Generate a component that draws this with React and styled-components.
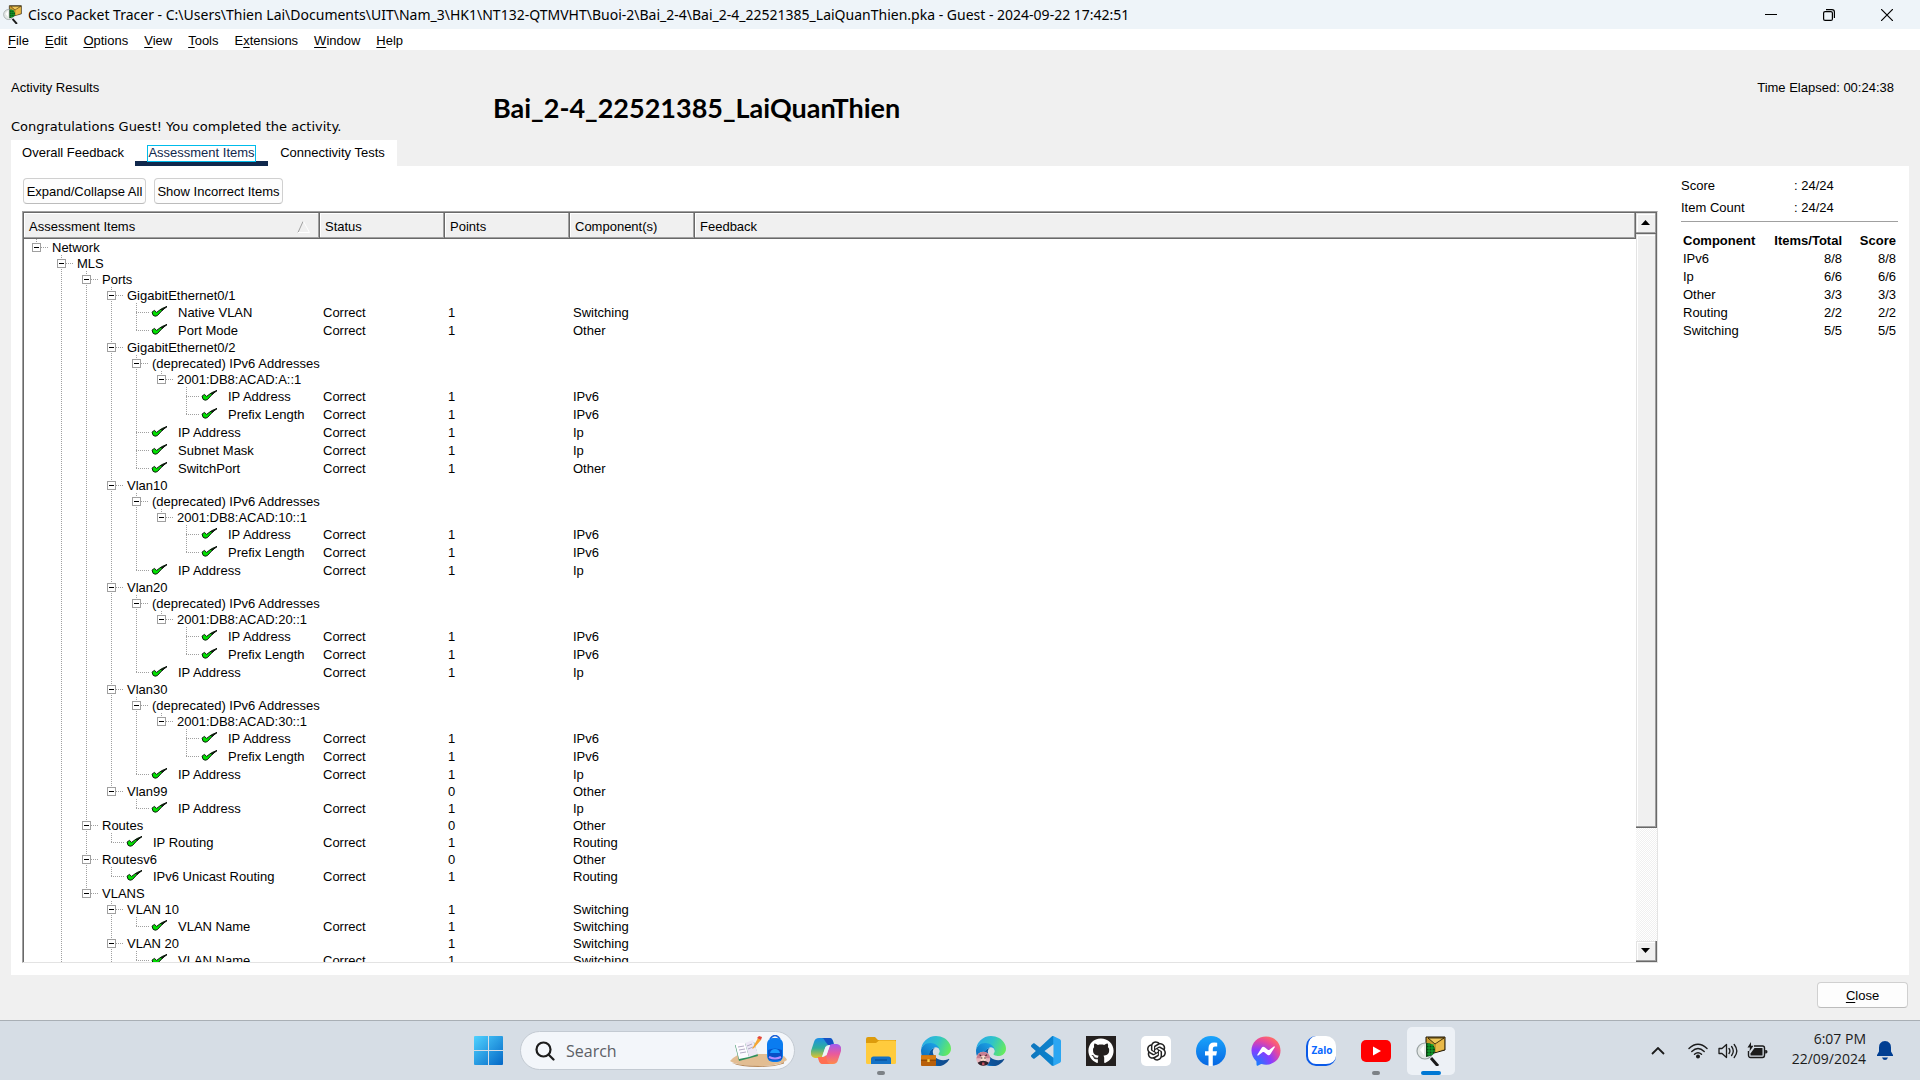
import React, { useState } from "react";
import styled, { createGlobalStyle } from "styled-components";
import { FaGithub, FaFacebookMessenger } from "react-icons/fa";
import { AiOutlineOpenAI } from "react-icons/ai";

const UI = `"Liberation Sans", Arial, sans-serif`;
const SYSTEM = `"Open Sans", "Noto Sans", sans-serif`;

const GlobalStyle = createGlobalStyle`
  * { box-sizing: border-box; }
  body { margin: 0; background: #f0f0f0; color: #000; font: 13px/16px ${UI}; }
  button, input { font: inherit; color: inherit; padding: 0; margin: 0; border: 0; background: none; }
  h1, p, dl, dd, dt { margin: 0; }
  svg { display: block; flex: none; }
`;

const Screen = styled.div`
  display: flex;
  flex-direction: column;
  height: 100vh;
  overflow: hidden;
`;

/* ---------- title bar and menu ---------- */

const TitleBar = styled.header`
  display: flex;
  align-items: center;
  flex: none;
  height: 29px;
  padding: 0 7px 0 3px;
  gap: 6px;
  background: #eef4f9;
`;

const WindowTitle = styled.div`
  flex: 1;
  font: 14px/20px "Noto Sans", "Open Sans", sans-serif;
  white-space: nowrap;
`;

const WindowButton = styled.button`
  display: grid;
  place-items: center;
  width: 52px;
  height: 29px;
`;

const MenuBar = styled.nav`
  display: flex;
  flex: none;
  height: 21px;
  background: #fff;
`;

const MenuItem = styled.button`
  padding: 2px 8px 0;
  line-height: 19px;
`;

const Mnemonic = styled.span`
  text-decoration: underline;
  text-underline-offset: 2px;
`;

/* ---------- results area ---------- */

const Results = styled.main`
  display: flex;
  flex-direction: column;
  flex: 1;
  min-height: 0;
  background: #f0f0f0;
`;

const Summary = styled.section`
  display: grid;
  grid-template-columns: 482px auto 1fr;
  flex: none;
  padding: 30px 26px 5px 11px;
`;

const Messages = styled.div`
  display: flex;
  flex-direction: column;
  gap: 23px;
`;

const Congratulations = styled.p`
  font-family: "DejaVu Sans", Verdana, sans-serif;
  white-space: nowrap;
`;

const StudentName = styled.h1`
  align-self: center;
  font: bold 27px/32px Lato, Carlito, sans-serif;
`;

const Elapsed = styled.p`
  text-align: right;
`;

const TabList = styled.div`
  display: flex;
  flex: none;
  align-self: flex-start;
  height: 26px;
  margin-left: 11px;
  background: #fff;
`;

const Tab = styled.button`
  display: flex;
  justify-content: center;
  min-width: ${(p) => p.$width};
  height: 26px;
  padding-top: 6px;
  border-bottom: 5px solid ${(p) => (p.$active ? "#10284c" : "transparent")};
  color: ${(p) => (p.$active ? "#10284c" : "#000")};
  line-height: 14px;
`;

const TabLabel = styled.span`
  outline: ${(p) => (p.$active ? "1px solid #00bceb" : "none")};
`;

const Panel = styled.section`
  display: flex;
  flex: 1;
  gap: 23px;
  min-height: 0;
  margin: 0 11px;
  padding: 12px 11px 12px;
  background: #fff;
`;

const ItemsColumn = styled.div`
  display: flex;
  flex-direction: column;
  gap: 7px;
  flex: 1;
  min-width: 0;
`;

const Toolbar = styled.div`
  display: flex;
  gap: 8px;
  padding-left: 1px;
`;

const PushButton = styled.button`
  height: 26px;
  min-width: ${(p) => p.$minWidth || "0"};
  padding: 2px 2px 0;
  border: 1px solid #d0d0d0;
  border-bottom-color: #bcbcbc;
  border-radius: 4px;
  background: #fdfdfd;
`;

/* ---------- tree table ---------- */

const Frame = styled.div`
  flex: 1;
  min-height: 0;
  border: 1px solid #a0a0a0;
  border-right-color: #e3e3e3;
  border-bottom-color: #e3e3e3;
`;

const FrameInner = styled.div`
  display: flex;
  height: 100%;
  border-top: 1px solid #696969;
  border-left: 1px solid #696969;
`;

const Viewport = styled.div`
  flex: 1;
  min-width: 0;
  overflow: hidden;
`;

const TreeTable = styled.table`
  width: 100%;
  table-layout: fixed;
  border-collapse: collapse;
`;

const Column = styled.col`
  width: ${(p) => p.$width || "auto"};
`;

const HeadCell = styled.th`
  height: 26px;
  padding: 2px 9px 0 5px;
  background: #f0f0f0;
  box-shadow: inset -1px -1px #696969, inset -2px -2px #a0a0a0, inset 1px 1px #fff;
  font-weight: normal;
  text-align: left;
`;

const HeadContent = styled.div`
  display: flex;
  align-items: center;
  justify-content: space-between;
`;

const Row = styled.tr`
  height: ${(p) => (p.$leaf ? 18 : 16)}px;
`;

const Cell = styled.td`
  padding: 2px 0 0 3px;
  line-height: 14px;
  white-space: nowrap;
`;

const NameCell = styled.td`
  padding: 0;
`;

const NameLine = styled.div`
  display: flex;
  align-items: center;
  height: ${(p) => (p.$leaf ? 18 : 16)}px;
  line-height: 14px;
  white-space: nowrap;
`;

const DOTS_DOWN = "repeating-linear-gradient(#a0a0a0 0 1px, transparent 1px 2px)";
const DOTS_RIGHT = "repeating-linear-gradient(90deg, #a0a0a0 0 1px, transparent 1px 2px)";

const Guide = styled.span`
  display: flex;
  align-items: center;
  align-self: stretch;
  flex: none;
  width: 25px;
  background: ${(p) => (p.$line === "none" ? "none" : DOTS_DOWN)} 12px 0 / 1px
    ${(p) => (p.$line === "half" ? "50%" : "100%")} no-repeat;
`;

const Branch = styled.span`
  flex: 1;
  height: 1px;
  margin-left: ${(p) => (p.$leaf ? "12px" : "0")};
  background: ${DOTS_RIGHT};
`;

const Toggle = styled.button`
  display: grid;
  place-items: center;
  flex: none;
  width: 9px;
  height: 9px;
  margin-left: 8px;
  border: 1px solid #a0a0a0;
  background: #fff;
`;

const Label = styled.span`
  padding-top: 2px;
  padding-left: ${(p) => (p.$leaf ? "10px" : "3px")};
`;

const CheckMark = styled.svg`
  margin-left: 2px;
  width: 17px;
  height: 14px;
`;

/* ---------- scroll bar ---------- */

const ScrollBar = styled.div`
  display: flex;
  flex-direction: column;
  flex: none;
  width: 21px;
`;

const ScrollButton = styled.button`
  display: grid;
  place-items: center;
  flex: none;
  height: 21px;
  padding: 0 2px 2px 0;
  background: #f0f0f0;
  box-shadow: inset -1px -1px #696969, inset -2px -2px #a0a0a0, inset 1px 1px #e3e3e3, inset 2px 2px #fff;
`;

const ScrollTrack = styled.div`
  flex: 1;
  background: repeating-conic-gradient(#f0f0f0 0 25%, #fff 0 50%) 0 0 / 2px 2px;
`;

const ScrollThumb = styled.div`
  height: 84%;
  background: #f0f0f0;
  box-shadow: inset -1px -1px #696969, inset -2px -2px #a0a0a0, inset 1px 1px #e3e3e3, inset 2px 2px #fff;
`;

/* ---------- score side bar ---------- */

const SideBar = styled.aside`
  flex: none;
  width: 217px;
  padding-top: 1px;
`;

const Totals = styled.dl`
  display: grid;
  grid-template-columns: 113px 1fr;
  row-gap: 8px;
  padding-bottom: 6px;
  border-bottom: 1px solid #a0a0a0;
  line-height: 14px;
`;

const ScoreTable = styled.table`
  width: 100%;
  margin-top: 9px;
  border-collapse: collapse;
  th, td { height: 18px; padding: 2px 2px 0; line-height: 14px; text-align: right; }
  th:first-child, td:first-child { text-align: left; }
  th:last-child { width: 54px; }
`;

const Footer = styled.footer`
  display: flex;
  justify-content: flex-end;
  flex: none;
  padding: 7px 12px 12px;
`;

/* ---------- task bar ---------- */

const TaskBar = styled.footer`
  display: grid;
  grid-template-columns: 1fr auto 1fr;
  align-items: center;
  flex: none;
  height: 60px;
  border-top: 1px solid #a9afb5;
  background: #d6dde5;
  font: 14px/20px ${SYSTEM};
`;

const Apps = styled.div`
  display: flex;
  grid-column: 2;
  align-items: center;
  gap: 7px;
`;

const AppButton = styled.button`
  position: relative;
  display: grid;
  place-items: center;
  width: 48px;
  height: 48px;
  border-radius: 5px;
  background: ${(p) => (p.$active ? "#edf1f6" : "transparent")};
`;

const Indicator = styled.span`
  position: absolute;
  bottom: 0;
  left: 50%;
  width: ${(p) => (p.$active ? "20px" : "8px")};
  height: 4px;
  border-radius: 2px;
  background: ${(p) => (p.$active ? "#0078d4" : "#7c8186")};
  transform: translateX(-50%);
`;

const SearchBox = styled.label`
  display: flex;
  align-items: center;
  width: 275px;
  height: 39px;
  padding: 0 6px 0 14px;
  gap: 11px;
  border: 1px solid #c3cad2;
  border-radius: 20px;
  background: #f3f6fa;
`;

const SearchInput = styled.input`
  flex: 1;
  min-width: 0;
  font: 16px/22px ${SYSTEM};
  outline: none;
  &::placeholder { color: #5c6066; opacity: 1; }
`;

const Tile = styled.span`
  display: grid;
  place-items: center;
  width: 30px;
  height: 30px;
  border-radius: ${(p) => p.$radius};
  background: ${(p) => p.$bg};
  color: ${(p) => p.$color};
`;

const ZaloTile = styled(Tile)`
  border-left: 2px solid #0a5ae8;
  border-bottom: 2px solid #0a5ae8;
  font: bold 10px/14px "Open Sans", sans-serif;
`;

const Tray = styled.div`
  display: flex;
  align-items: center;
  justify-content: flex-end;
  grid-column: 3;
  padding-right: 24px;
`;

const TrayButton = styled.button`
  display: grid;
  place-items: center;
  width: ${(p) => p.$width || "30px"};
  height: 40px;
`;

const Clock = styled.button`
  padding: 0 8px 3px 19px;
  color: #1b1b1b;
  text-align: right;
`;

/* ---------- data ---------- */

const leaf = (name, component) => ({ name, status: "Correct", points: 1, component });
const ipv6Group = (address) => ({
  name: "(deprecated) IPv6 Addresses",
  children: [{ name: address, children: [leaf("IP Address", "IPv6"), leaf("Prefix Length", "IPv6")] }],
});
const vlanPort = (name, address) => ({ name, children: [ipv6Group(address), leaf("IP Address", "Ip")] });

const tree = [
  {
    name: "Network",
    children: [
      {
        name: "MLS",
        more: true,
        children: [
          {
            name: "Ports",
            children: [
              { name: "GigabitEthernet0/1", children: [leaf("Native VLAN", "Switching"), leaf("Port Mode", "Other")] },
              {
                name: "GigabitEthernet0/2",
                children: [
                  ipv6Group("2001:DB8:ACAD:A::1"),
                  leaf("IP Address", "Ip"),
                  leaf("Subnet Mask", "Ip"),
                  leaf("SwitchPort", "Other"),
                ],
              },
              vlanPort("Vlan10", "2001:DB8:ACAD:10::1"),
              vlanPort("Vlan20", "2001:DB8:ACAD:20::1"),
              vlanPort("Vlan30", "2001:DB8:ACAD:30::1"),
              { name: "Vlan99", points: 0, component: "Other", children: [leaf("IP Address", "Ip")] },
            ],
          },
          { name: "Routes", points: 0, component: "Other", children: [leaf("IP Routing", "Routing")] },
          { name: "Routesv6", points: 0, component: "Other", children: [leaf("IPv6 Unicast Routing", "Routing")] },
          {
            name: "VLANS",
            children: [
              { name: "VLAN 10", points: 1, component: "Switching", children: [leaf("VLAN Name", "Switching")] },
              { name: "VLAN 20", points: 1, component: "Switching", more: true, children: [leaf("VLAN Name", "Switching")] },
            ],
          },
        ],
      },
    ],
  },
];

function flatten(nodes, closed, lines = [], prefix = "") {
  return nodes.flatMap((node, i) => {
    const id = `${prefix}/${i}`;
    const continues = Boolean(node.more) || i < nodes.length - 1;
    const row = { ...node, id, lines, continues };
    const below = node.children && !closed.has(id) ? flatten(node.children, closed, [...lines, continues], id) : [];
    return [row, ...below];
  });
}

const scores = [
  ["IPv6", "8/8", "8/8"],
  ["Ip", "6/6", "6/6"],
  ["Other", "3/3", "3/3"],
  ["Routing", "2/2", "2/2"],
  ["Switching", "5/5", "5/5"],
];

const menus = [
  ["", "F", "ile"],
  ["", "E", "dit"],
  ["", "O", "ptions"],
  ["", "V", "iew"],
  ["", "T", "ools"],
  ["E", "x", "tensions"],
  ["", "W", "indow"],
  ["", "H", "elp"],
];

const tabs = [
  { name: "Overall Feedback", width: "124px" },
  { name: "Assessment Items", width: "133px", active: true },
  { name: "Connectivity Tests", width: "129px" },
];

/* ---------- icons ---------- */

const PacketTracerIcon = ({ size }) => (
  <svg width={size} height={size} viewBox="0 0 30 30">
    <path d="M10 1h19v13l-11 3-8-6z" fill="#c99a2e" stroke="#1c1404" />
    <path d="M12 2l16 0-9 6z" fill="#f0c75a" stroke="#1c1404" strokeWidth=".8" />
    <path d="M28 3v10l-8 3v-8z" fill="#e9b949" />
    <circle cx="9" cy="15" r="8" fill="#e4e8e6" stroke="#9aa3a3" strokeWidth="1.2" />
    <path d="M10 7c6 0 9 3 9 7s-3 6-9 7z" fill="#0c4413" />
    <path d="M11 9h7M11 12h8M11 15h8M11 18h6M13 7v13M16 8v11" stroke="#12b52f" strokeWidth=".9" />
    <path d="M4 14l4-5v10z" fill="#fff" />
    <path d="M15 22l7 8" stroke="#1a1a1a" strokeWidth="3" />
  </svg>
);

const Check = () => (
  <CheckMark viewBox="0 0 17 14" aria-hidden="true">
    <path d="M1 7.2L3.4 5.4L5.6 7.4Q10 3.2 16 1.4Q10.6 5.4 6.4 10.6L4.2 11.2L2.2 10.4Z" fill="#00e000" stroke="#0a1a0a" strokeWidth="1" strokeLinejoin="round" />
    <path d="M10 4.800L16 1.6L11 5.500Z" fill="#111" stroke="#111" strokeWidth=".6" />
  </CheckMark>
);

const SortArrow = () => (
  <svg width="14" height="14" viewBox="0 0 14 14">
    <path d="M1 12.5L6 1.5" stroke="#a0a0a0" fill="none" />
    <path d="M6.5 1.5L12.5 12.5H1" stroke="#fff" fill="none" />
  </svg>
);

const WindowsIcon = () => (
  <svg width="30" height="30" viewBox="0 0 30 30">
    <defs>
      <linearGradient id="win" x1="0" y1="0" x2="1" y2="1">
        <stop offset="0" stopColor="#4fd2ff" />
        <stop offset="1" stopColor="#0467c6" />
      </linearGradient>
    </defs>
    <path d="M1 0h13v14H0V1q0-1 1-1zM15 0h13q1 0 1 1v13H15zM0 15h14v14H1q-1 0-1-1zM15 15h14v13q0 1-1 1H15z" fill="url(#win)" />
  </svg>
);

const SearchIcon = () => (
  <svg width="20" height="20" viewBox="0 0 20 20" fill="none" stroke="#1c1c1c" strokeWidth="2.2">
    <circle cx="8.5" cy="8.5" r="7" />
    <path d="M13.5 13.5L18.5 18.5" strokeLinecap="round" />
  </svg>
);

const SchoolArt = () => (
  <svg width="58" height="32" viewBox="0 0 58 32">
    <path d="M0 26Q6 19 14 19H48Q56 21 57 25Q50 31 30 31Q8 31 0 26Z" fill="#e2bd92" />
    <path d="M2 28Q14 31 30 31Q48 31 54 27V28.500Q44 32 28 32Q10 32 2 28Z" fill="#b98b5c" />
    <path d="M5 10L9 26L28 21L24 7Z" fill="#2f8f5b" />
    <path d="M5 8L15 8L19 22L9 24Z" fill="#fdfbff" />
    <path d="M15 8L23 5L28 19L19 22Z" fill="#ece7f5" />
    <path d="M8 12l6-1M9 15l6-1M10 18l6-1M17 11l5-2M18 14l5-2" stroke="#a9a3bd" strokeWidth=".9" />
    <path d="M22 14L28 3L31 5L24 13Z" fill="#f6a531" />
    <path d="M27 3L29 1L32 2L31 5Z" fill="#e4483a" />
    <path d="M40 4Q45-3 50 4" fill="none" stroke="#1e63d8" strokeWidth="1.600" />
    <rect x="37" y="3" width="16" height="24" rx="6" fill="#0a7cf0" />
    <path d="M38 15Q45 12 52 15V24Q45 27 38 24Z" fill="#0550c8" />
    <path d="M40 18Q41 14 45 14T50 18Z" fill="#1a9cff" />
    <path d="M39 22q6 3 12 0" stroke="#b48cff" strokeWidth="2" fill="none" />
  </svg>
);

const CopilotIcon = () => (
  <svg width="30" height="28" viewBox="0 0 30 28">
    <defs>
      <linearGradient id="cpA" x1="0" y1="0" x2="0" y2="1">
        <stop offset="0" stopColor="#1c8ee8" />
        <stop offset=".5" stopColor="#2fae9a" />
        <stop offset="1" stopColor="#e6c32a" />
      </linearGradient>
      <linearGradient id="cpB" x1="0" y1="0" x2="0" y2="1">
        <stop offset="0" stopColor="#a25cf0" />
        <stop offset=".5" stopColor="#ea5a9c" />
        <stop offset="1" stopColor="#ff8a4a" />
      </linearGradient>
    </defs>
    <path d="M8 1H19Q21 1 22 4L23 8H18Q15 8 14 11L11 20Q10 21 8 21H4Q-1 20 0 14L3 5Q4 1 8 1Z" fill="url(#cpA)" />
    <path d="M11 1H19Q21 1 22 4L23 8H17L14 4Q13 1 11 1Z" fill="#1552c4" />
    <path d="M22 27H11Q9 27 8 24L7 20H12Q15 20 16 17L19 8Q20 7 22 7H26Q31 8 30 14L27 23Q26 27 22 27Z" fill="url(#cpB)" />
    <path d="M7 20H12Q14 20 15 18L16 24Q17 27 19 27H11Q9 27 8 24Z" fill="#ff6f52" />
    <path d="M14.500 10L19 8L15.500 18L11 20Z" fill="#eef3f8" />
  </svg>
);

const FolderIcon = () => (
  <svg width="30" height="28" viewBox="0 0 30 28">
    <path d="M0 2Q0 0 2 0H9L12 3H30V12H0Z" fill="#dd9b0c" />
    <path d="M0 6H10L13 3.500H29Q30 3.500 30 5V25.500Q30 27 28.500 27H1.500Q0 27 0 25.500Z" fill="#ffcb3d" />
    <path d="M5 27V22Q5 19.500 7.500 19.500H22.500Q25 19.500 25 22V27Z" fill="#1371c6" />
    <path d="M9 23H21" stroke="#0a4d94" strokeWidth="1.200" />
  </svg>
);

const EdgeIcon = ({ id, children }) => (
  <svg width="30" height="30" viewBox="0 0 256 256">
    <defs>
      <linearGradient id={`${id}a`} x1="0" y1="0" x2="1" y2="0">
        <stop offset="0" stopColor="#0c59a4" />
        <stop offset="1" stopColor="#114a8b" />
      </linearGradient>
      <linearGradient id={`${id}b`} x1=".8" y1=".2" x2=".3" y2="1">
        <stop offset="0" stopColor="#1b9de2" />
        <stop offset="1" stopColor="#0a62b5" />
      </linearGradient>
      <linearGradient id={`${id}c`} x1="0" y1=".3" x2="1" y2=".6">
        <stop offset="0" stopColor="#2aa9ea" />
        <stop offset=".5" stopColor="#2fc3c9" />
        <stop offset="1" stopColor="#66eb5c" />
      </linearGradient>
    </defs>
    <path fill={`url(#${id}a)`} d="M235.7 195.500a93.700 93.700 0 01-10.600 4.700 101.900 101.900 0 01-35.900 6.400c-47.300 0-88.500-32.500-88.500-74.300a31.500 31.500 0 0116.400-27.300c-42.800 1.800-53.800 46.400-53.800 72.500 0 74 68.100 81.400 82.800 81.400 7.900 0 19.800-2.300 27-4.600l1.300-.4a128.300 128.300 0 0066.600-52.800 4 4 0 00-5.300-5.600z" />
    <path fill={`url(#${id}b)`} d="M105.700 241.400a79.200 79.200 0 01-22.700-21.300 80.700 80.700 0 0129.500-120c3.200-1.500 8.500-4.100 15.600-4a32.400 32.400 0 0125.700 13 31.900 31.900 0 016.300 18.700c0-.2 24.500-79.600-80-79.600-43.900 0-80 41.600-80 78.200a130.200 130.200 0 0012.100 56 128 128 0 00156.400 67 75.500 75.500 0 01-62.800-8z" />
    <path fill={`url(#${id}c)`} d="M152.300 148.900c-.9 1-3.400 2.500-3.400 5.600 0 2.600 1.700 5.200 4.800 7.300 14.300 10 41.400 8.600 41.500 8.600a59.600 59.600 0 0030.300-8.300 61.400 61.400 0 0030.400-52.900c.3-22.400-8-37.300-11.300-43.900C223.500 23.900 177.700 0 128 0A128 128 0 000 126.200c.5-36.500 36.800-66 80-66 3.500 0 23.500.3 42 10a72.600 72.600 0 0130.900 29.300c6.100 10.600 7.200 24.100 7.200 29.500s-2.700 13.300-7.800 19.900z" />
    {children}
  </svg>
);

const Briefcase = () => (
  <g>
    <rect x="0" y="164" width="128" height="92" rx="8" fill="#b85f0a" />
    <rect x="0" y="164" width="128" height="42" rx="8" fill="#d97c10" />
    <path d="M0 206H128" stroke="#7c3c04" strokeWidth="8" />
    <rect x="54" y="198" width="20" height="24" fill="#ffd24a" />
  </g>
);

const Avatar = () => (
  <g>
    <circle cx="62" cy="194" r="60" fill="#e8b6bd" />
    <path d="M4 190Q12 134 62 134Q112 136 120 190L88 190L62 164L38 190Z" fill="#c97f92" />
    <circle cx="62" cy="192" r="24" fill="#f7dccb" />
    <path d="M14 228Q60 196 110 228Q96 254 62 254Q28 254 14 228Z" fill="#2e2029" />
    <path d="M40 188h14M70 188h14M30 160l14 8M94 160l-14 8" stroke="#40262c" strokeWidth="9" />
    <path d="M52 226h20v22H52z" fill="#c9515f" />
  </g>
);

const CodeIcon = () => (
  <svg width="30" height="30" viewBox="0 0 100 100">
    <defs>
      <linearGradient id="vs" x1="0" y1="0" x2="1" y2="0">
        <stop offset="0" stopColor="#0f76bd" />
        <stop offset=".72" stopColor="#0b83cf" />
        <stop offset=".76" stopColor="#2ba6f2" />
        <stop offset="1" stopColor="#2ba6f2" />
      </linearGradient>
    </defs>
    <path fill="url(#vs)" fillRule="evenodd" d="M70.912 99.317C72.487 99.931 74.283 99.891 75.872 99.126L96.461 89.220C98.624 88.179 100 85.989 100 83.587V16.413C100 14.011 98.624 11.822 96.461 10.781L75.872 .874C73.786 -.130 71.345 .116 69.513 1.447C69.252 1.637 69.003 1.849 68.769 2.083L29.355 38.041L12.187 25.010C10.589 23.796 8.354 23.896 6.869 25.246L1.363 30.255C-.453 31.906 -.455 34.763 1.358 36.417L16.247 50L1.358 63.583C-.455 65.237 -.453 68.094 1.363 69.745L6.869 74.754C8.354 76.104 10.589 76.204 12.187 74.990L29.355 61.959L68.769 97.917C69.392 98.541 70.125 99.010 70.912 99.317ZM75.015 27.299L45.109 50L75.015 72.701V27.299Z" />
  </svg>
);

const FacebookIcon = () => (
  <svg width="30" height="30" viewBox="0 0 30 30">
    <defs>
      <linearGradient id="fb" x1="0" y1="0" x2="0" y2="1">
        <stop offset="0" stopColor="#1aa4fb" />
        <stop offset="1" stopColor="#0667e3" />
      </linearGradient>
    </defs>
    <circle cx="15" cy="15" r="15" fill="url(#fb)" />
    <path d="M12.500 30V19.500H9V15.300H12.500V12.200Q12.500 6.500 18.200 6.500Q20 6.500 21.200 6.800V10.500H19Q16.800 10.500 16.800 12.700V15.300H21L20.200 19.500H16.800V30Q14.500 30.200 12.500 30Z" fill="#fff" />
  </svg>
);

const MessengerIcon = () => (
  <svg width="30" height="30" viewBox="0 0 30 30">
    <defs>
      <radialGradient id="ms" cx=".15" cy="1" r="1.100">
        <stop offset="0" stopColor="#0a86ff" />
        <stop offset=".5" stopColor="#8a3cff" />
        <stop offset=".8" stopColor="#e8489c" />
        <stop offset="1" stopColor="#ff6a68" />
      </radialGradient>
    </defs>
    <circle cx="15" cy="14" r="10" fill="#fff" />
    <FaFacebookMessenger size={30} fill="url(#ms)" />
  </svg>
);

const YoutubeIcon = () => (
  <svg width="30" height="22" viewBox="0 0 30 22">
    <rect width="30" height="22" rx="5" fill="#f00" />
    <path d="M12 6.500L20 11L12 15.500Z" fill="#fff" />
  </svg>
);

const WifiIcon = () => (
  <svg width="20" height="16" viewBox="0 0 20 16" fill="none" stroke="#1b1b1b" strokeWidth="1.400" strokeLinecap="round">
    <path d="M1 5.500Q10-3 19 5.500M3.800 8.500Q10 2.500 16.200 8.500M6.500 11.300Q10 8 13.500 11.300" />
    <circle cx="10" cy="13.600" r="1.300" fill="#1b1b1b" />
  </svg>
);

const VolumeIcon = () => (
  <svg width="20" height="16" viewBox="0 0 20 16" fill="none" stroke="#1b1b1b" strokeWidth="1.300" strokeLinejoin="round" strokeLinecap="round">
    <path d="M1 5.500H4L8.500 1.500V14.500L4 10.500H1ZM11 5.500Q12.800 8 11 10.500M13.600 3.500Q17 8 13.600 12.500M16.200 1.500Q21.500 8 16.200 14.500" />
  </svg>
);

const BatteryIcon = () => (
  <svg width="21" height="17" viewBox="0 0 21 17">
    <path d="M7 4H15.500Q17.500 4 17.500 6V13Q17.500 15.500 15.500 15.500H3.500Q1.500 15.500 1.500 13V9" fill="none" stroke="#1b1b1b" strokeWidth="1.400" />
    <path d="M7.500 6H15.500V13.500H3.500V11.500Z" fill="#1b1b1b" />
    <path d="M18.200 8H19Q20.500 8.200 20.500 9.800T19 11.500H18.200Z" fill="#1b1b1b" />
    <path d="M4 0L.5 5.500H3L2.500 9.500L6.500 3.800H4Z" fill="#1b1b1b" />
  </svg>
);

const BellIcon = () => (
  <svg width="16" height="19" viewBox="0 0 16 19" fill="#003e92">
    <path d="M8 0Q14 .5 14 6.500V10.500L16 14V15H0V14L2 10.500V6.500Q2 .5 8 0Z" />
    <path d="M5 16.500H11Q10 19 8 19T5 16.500Z" />
  </svg>
);

/* ---------- parts ---------- */

function TreeRow({ row, closed, onToggle }) {
  const isLeaf = !row.children;
  return (
    <Row $leaf={isLeaf}>
      <NameCell>
        <NameLine $leaf={isLeaf}>
          {row.lines.map((on, i) => (
            <Guide key={i} $line={on ? "full" : "none"} />
          ))}
          <Guide $line={row.continues ? "full" : "half"}>
            {!isLeaf && (
              <Toggle aria-label={`Toggle ${row.name}`} onClick={() => onToggle(row.id)}>
                <svg width="7" height="7" viewBox="0 0 7 7">
                  <path d={closed ? "M1 3.500H6M3.500 1V6" : "M1 3.500H6"} stroke="#000" />
                </svg>
              </Toggle>
            )}
            <Branch $leaf={isLeaf} />
          </Guide>
          {isLeaf && <Check />}
          <Label $leaf={isLeaf}>{row.name}</Label>
        </NameLine>
      </NameCell>
      <Cell>{row.status}</Cell>
      <Cell>{row.points}</Cell>
      <Cell>{row.component}</Cell>
      <Cell />
    </Row>
  );
}

function AssessmentTree() {
  const [closed, setClosed] = useState(() => new Set());
  const toggle = (id) =>
    setClosed((prev) => {
      const next = new Set(prev);
      if (!next.delete(id)) next.add(id);
      return next;
    });
  return (
    <Frame>
      <FrameInner>
        <Viewport>
          <TreeTable>
            <colgroup>
              <Column $width="296px" />
              <Column $width="125px" />
              <Column $width="125px" />
              <Column $width="125px" />
              <Column />
            </colgroup>
            <thead>
              <tr>
                <HeadCell>
                  <HeadContent>
                    Assessment Items
                    <SortArrow />
                  </HeadContent>
                </HeadCell>
                <HeadCell>Status</HeadCell>
                <HeadCell>Points</HeadCell>
                <HeadCell>Component(s)</HeadCell>
                <HeadCell>Feedback</HeadCell>
              </tr>
            </thead>
            <tbody>
              {flatten(tree, closed).map((row) => (
                <TreeRow key={row.id} row={row} closed={closed.has(row.id)} onToggle={toggle} />
              ))}
            </tbody>
          </TreeTable>
        </Viewport>
        <ScrollBar>
          <ScrollButton aria-label="Scroll up">
            <svg width="9" height="5" viewBox="0 0 9 5"><path d="M4.500 0L9 5H0Z" /></svg>
          </ScrollButton>
          <ScrollTrack>
            <ScrollThumb />
          </ScrollTrack>
          <ScrollButton aria-label="Scroll down">
            <svg width="9" height="5" viewBox="0 0 9 5"><path d="M0 0H9L4.500 5Z" /></svg>
          </ScrollButton>
        </ScrollBar>
      </FrameInner>
    </Frame>
  );
}

const apps = [
  { name: "Copilot", icon: <CopilotIcon /> },
  { name: "File Explorer", icon: <FolderIcon />, open: true },
  { name: "Edge Work", icon: <EdgeIcon id="ew"><Briefcase /></EdgeIcon> },
  { name: "Edge Personal", icon: <EdgeIcon id="ep"><Avatar /></EdgeIcon> },
  { name: "Visual Studio Code", icon: <CodeIcon /> },
  { name: "GitHub", icon: <Tile $bg="#24201f" $color="#fff" $radius="0"><FaGithub size={26} /></Tile> },
  { name: "ChatGPT", icon: <Tile $bg="#fff" $color="#222" $radius="5px"><AiOutlineOpenAI size={25} /></Tile> },
  { name: "Facebook", icon: <FacebookIcon /> },
  { name: "Messenger", icon: <MessengerIcon /> },
  { name: "Zalo", icon: <ZaloTile $bg="#fff" $color="#0a68ff" $radius="10px">Zalo</ZaloTile> },
  { name: "YouTube", icon: <YoutubeIcon />, open: true },
  { name: "Cisco Packet Tracer", icon: <PacketTracerIcon size={30} />, active: true },
];

export default function App() {
  return (
    <Screen>
      <GlobalStyle />
      <TitleBar>
        <PacketTracerIcon size={19} />
        <WindowTitle>
          {"Cisco Packet Tracer - C:\\Users\\Thien Lai\\Documents\\UIT\\Nam_3\\HK1\\NT132-QTMVHT\\Buoi-2\\Bai_2-4\\Bai_2-4_22521385_LaiQuanThien.pka - Guest - 2024-09-22 17:42:51"}
        </WindowTitle>
        <WindowButton aria-label="Minimize">
          <svg width="12" height="12" viewBox="0 0 12 12"><path d="M0 5.500H12" stroke="#000" /></svg>
        </WindowButton>
        <WindowButton aria-label="Restore">
          <svg width="12" height="12" viewBox="0 0 12 12" fill="none" stroke="#000" strokeWidth="1.200">
            <rect x=".6" y="2.600" width="8.800" height="8.800" rx="1.500" />
            <path d="M3 .6H9Q11.400 .6 11.400 3V9" />
          </svg>
        </WindowButton>
        <WindowButton aria-label="Close window">
          <svg width="12" height="12" viewBox="0 0 12 12"><path d="M0 0L12 12M12 0L0 12" stroke="#000" strokeWidth="1.200" /></svg>
        </WindowButton>
      </TitleBar>

      <MenuBar>
        {menus.map(([before, key, after]) => (
          <MenuItem key={before + key + after}>
            {before}
            <Mnemonic>{key}</Mnemonic>
            {after}
          </MenuItem>
        ))}
      </MenuBar>

      <Results>
        <Summary>
          <Messages>
            <p>Activity Results</p>
            <Congratulations>Congratulations Guest! You completed the activity.</Congratulations>
          </Messages>
          <StudentName>Bai_2-4_22521385_LaiQuanThien</StudentName>
          <Elapsed>Time Elapsed: 00:24:38</Elapsed>
        </Summary>

        <TabList role="tablist">
          {tabs.map(({ name, width, active }) => (
            <Tab key={name} role="tab" aria-selected={Boolean(active)} $active={active} $width={width}>
              <TabLabel $active={active}>{name}</TabLabel>
            </Tab>
          ))}
        </TabList>

        <Panel>
          <ItemsColumn>
            <Toolbar>
              <PushButton $minWidth="123px">Expand/Collapse All</PushButton>
              <PushButton $minWidth="129px">Show Incorrect Items</PushButton>
            </Toolbar>
            <AssessmentTree />
          </ItemsColumn>
          <SideBar>
            <Totals>
              <dt>Score</dt>
              <dd>: 24/24</dd>
              <dt>Item Count</dt>
              <dd>: 24/24</dd>
            </Totals>
            <ScoreTable>
              <thead>
                <tr>
                  <th>Component</th>
                  <th>Items/Total</th>
                  <th>Score</th>
                </tr>
              </thead>
              <tbody>
                {scores.map(([name, items, score]) => (
                  <tr key={name}>
                    <td>{name}</td>
                    <td>{items}</td>
                    <td>{score}</td>
                  </tr>
                ))}
              </tbody>
            </ScoreTable>
          </SideBar>
        </Panel>

        <Footer>
          <PushButton $minWidth="91px">
            <Mnemonic>C</Mnemonic>lose
          </PushButton>
        </Footer>
      </Results>

      <TaskBar>
        <Apps>
          <AppButton aria-label="Start"><WindowsIcon /></AppButton>
          <SearchBox>
            <SearchIcon />
            <SearchInput type="text" placeholder="Search" aria-label="Search" />
            <SchoolArt />
          </SearchBox>
          {apps.map((app) => (
            <AppButton key={app.name} aria-label={app.name} $active={app.active}>
              {app.icon}
              {(app.open || app.active) && <Indicator $active={app.active} />}
            </AppButton>
          ))}
        </Apps>
        <Tray>
          <TrayButton $width="50px" aria-label="Show hidden icons">
            <svg width="14" height="8" viewBox="0 0 14 8"><path d="M1 7L7 1L13 7" fill="none" stroke="#1b1b1b" strokeWidth="1.800" /></svg>
          </TrayButton>
          <TrayButton aria-label="Network"><WifiIcon /></TrayButton>
          <TrayButton aria-label="Volume"><VolumeIcon /></TrayButton>
          <TrayButton aria-label="Battery"><BatteryIcon /></TrayButton>
          <Clock>
            6:07 PM
            <br />
            22/09/2024
          </Clock>
          <TrayButton $width="22px" aria-label="Notifications"><BellIcon /></TrayButton>
        </Tray>
      </TaskBar>
    </Screen>
  );
}
